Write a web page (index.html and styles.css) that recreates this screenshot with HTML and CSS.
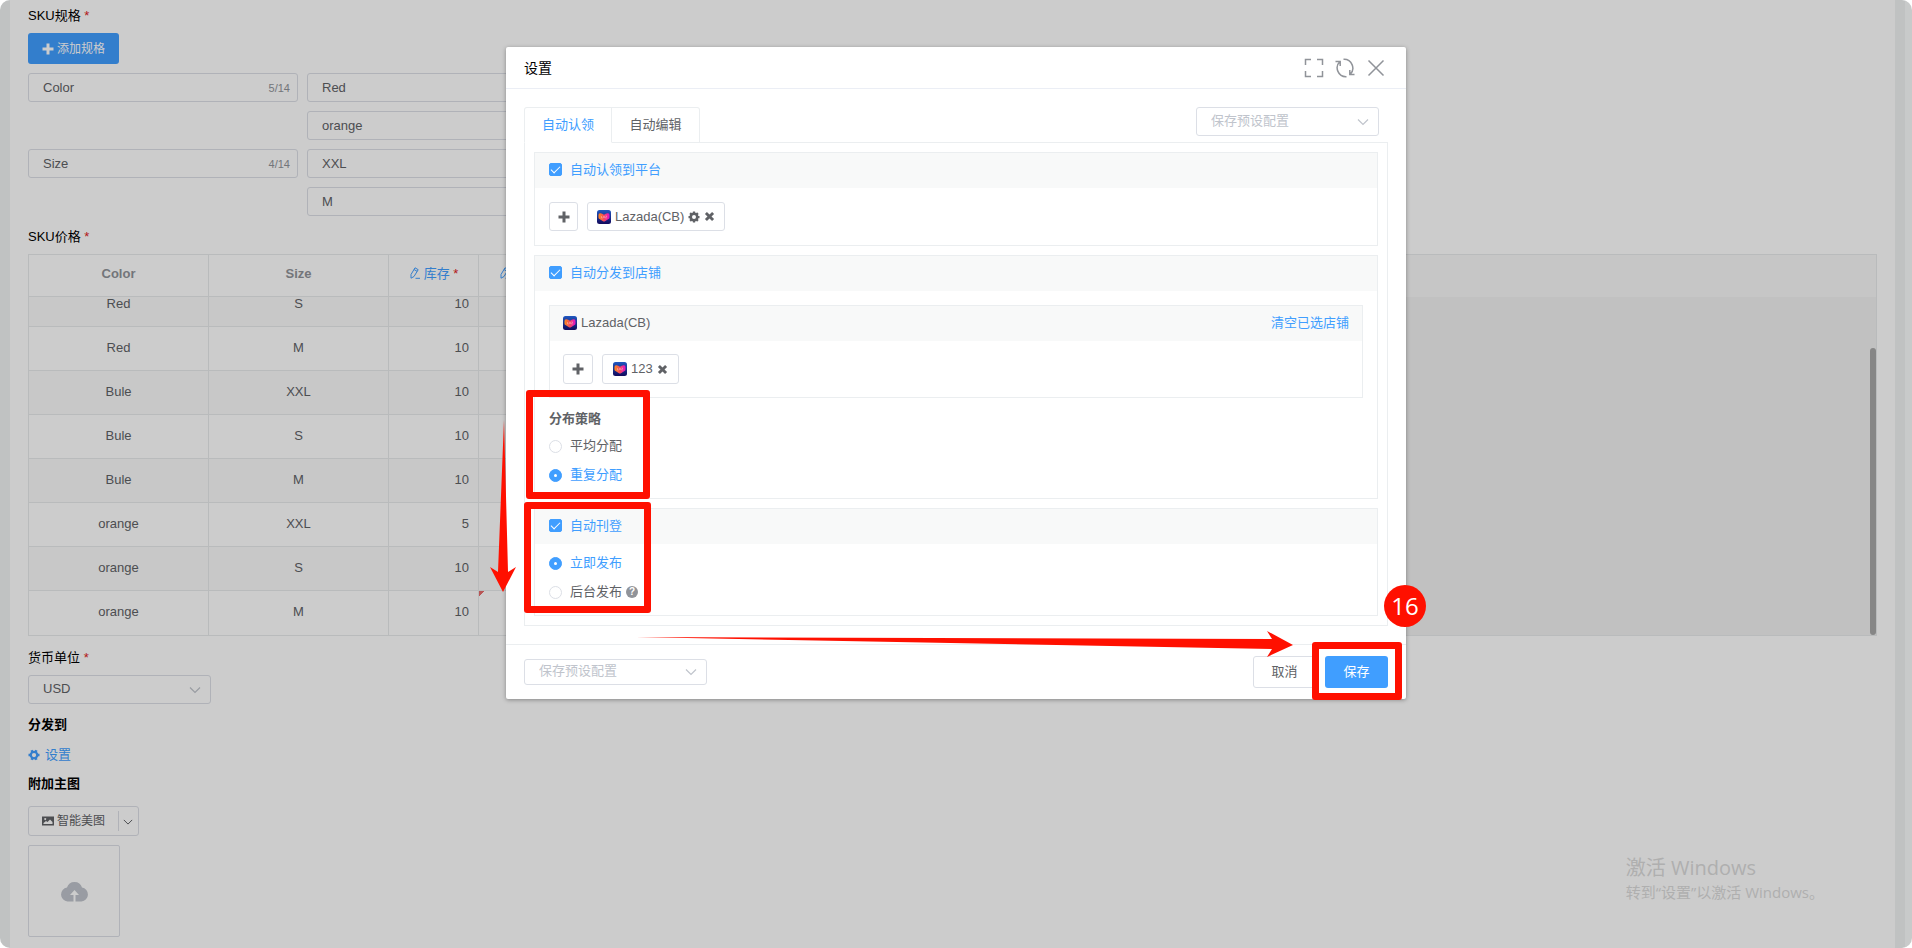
FILE: index.html
```html
<!DOCTYPE html>
<html lang="zh-CN">
<head>
    <meta charset="UTF-8">
    <meta name="viewport" content="width=device-width, initial-scale=1.0">
    <title>设置</title>
    <link rel="stylesheet" href="styles.css">
</head>
<body>
    <!-- Shared icons -->
    <svg class="sprite" aria-hidden="true">
        <symbol id="i-plus" viewBox="0 0 12 12"><path d="M4.500 .5h3v4h4v3h-4v4h-3v-4h-4v-3h4z"/></symbol>
        <symbol id="i-times" viewBox="0 0 12 12"><path d="M1 3.200 3.200 1 6 3.800 8.800 1 11 3.200 8.200 6 11 8.800 8.800 11 6 8.200 3.200 11 1 8.800 3.800 6z"/></symbol>
        <symbol id="i-arrow" viewBox="0 0 12 12"><path d="M1 3.500 6 8.500 11 3.500" fill="none" stroke="currentColor" stroke-width="1.200"/></symbol>
        <symbol id="i-gear" viewBox="0 0 24 24">
            <circle cx="12" cy="12" r="6.500" fill="none" stroke="currentColor" stroke-width="5"/>
            <path d="M12 1v5M12 18v5M1 12h5M18 12h5M4.200 4.200l3.500 3.500M16.300 16.300l3.500 3.500M4.200 19.800l3.500-3.500M16.300 7.700l3.500-3.500" stroke="currentColor" stroke-width="4.500"/>
        </symbol>
        <symbol id="i-gear6" viewBox="0 0 24 24">
            <circle cx="12" cy="12" r="6.500" fill="none" stroke="currentColor" stroke-width="4.500"/>
            <path d="M7 2.500 9.500 7M17 2.500 14.500 7M7 21.500 9.500 17M17 21.500 14.500 17M1 12h4M19 12h4" stroke="currentColor" stroke-width="5"/>
        </symbol>
        <symbol id="i-edit" viewBox="0 0 12 12"><path d="M2 7.500 6 .800 9.200 2.700 5 9.500 2 11.200zM5 2.500 8.200 4.400M6.500 11.300H11" fill="none" stroke="currentColor" stroke-width="1"/></symbol>
        <symbol id="i-lazada" viewBox="0 0 28 28">
            <rect width="28" height="28" rx="5" fill="url(#night)"/>
            <path d="M3 10Q3 7 6 6.500 10 6 14 9.500 18 6 22 6.500 25 7 25 10v5q0 2-2 3l-7 4.500q-2 1-4 0L5 18q-2-1-2-3z" fill="url(#heart)"/>
            <path d="M9 12v4h2.500M12.500 16l1.500-4 1.500 4M17 12h2.500L17 16h2.500" fill="none" stroke="#fff" stroke-opacity=".6" stroke-width="1"/>
        </symbol>
        <linearGradient id="night" x2="0" y2="1"><stop offset="0" stop-color="#2058c0"/><stop offset="1" stop-color="#12095c"/></linearGradient>
        <linearGradient id="heart"><stop offset="0" stop-color="#ff8a1c"/><stop offset=".5" stop-color="#f5485f"/><stop offset="1" stop-color="#e312c8"/></linearGradient>
    </svg>

    <div class="screen">
        <div class="page">
            <div class="label">SKU规格 <span class="star">*</span></div>
            <button class="btn btn-primary btn-add"><svg class="icon"><use href="#i-plus"/></svg>添加规格</button>

            <div class="specs">
                <div class="field">
                    <input id="spec1" type="text" value="Color" aria-label="规格名称">
                    <span class="count">5/14</span>
                </div>
                <div class="values">
                    <input type="text" value="Red" aria-label="规格值">
                    <input type="text" value="orange" aria-label="规格值">
                </div>
                <div class="field">
                    <input id="spec2" type="text" value="Size" aria-label="规格名称">
                    <span class="count">4/14</span>
                </div>
                <div class="values">
                    <input type="text" value="XXL" aria-label="规格值">
                    <input type="text" value="M" aria-label="规格值">
                </div>
            </div>

            <div class="label">SKU价格 <span class="star">*</span></div>
            <div class="grid">
                <table class="sku sku-head">
                    <tr>
                        <th class="wide">Color</th>
                        <th class="wide">Size</th>
                        <th class="stock"><a href="#"><svg class="icon"><use href="#i-edit"/></svg>库存</a> <span class="star">*</span></th>
                        <th class="edit"><a href="#" aria-label="编辑"><svg class="icon"><use href="#i-edit"/></svg></a></th>
                    </tr>
                </table>
                <div class="grid-body">
                    <table class="sku">
                        <tr><td class="wide">Red</td><td class="wide">S</td><td class="stock">10</td><td></td></tr>
                        <tr><td>Red</td><td>M</td><td class="stock">10</td><td></td></tr>
                        <tr><td>Bule</td><td>XXL</td><td class="stock">10</td><td></td></tr>
                        <tr><td>Bule</td><td>S</td><td class="stock">10</td><td></td></tr>
                        <tr><td>Bule</td><td>M</td><td class="stock">10</td><td></td></tr>
                        <tr><td>orange</td><td>XXL</td><td class="stock">5</td><td></td></tr>
                        <tr><td>orange</td><td>S</td><td class="stock">10</td><td></td></tr>
                        <tr><td>orange</td><td>M</td><td class="stock">10</td><td class="dirty"></td></tr>
                    </table>
                    <div class="scroll-thumb"></div>
                </div>
            </div>

            <label class="label" for="currency">货币单位 <span class="star">*</span></label>
            <div class="select">
                <select id="currency"><option>USD</option></select>
                <svg class="icon"><use href="#i-arrow"/></svg>
            </div>

            <div class="label label-bold">分发到</div>
            <a class="setting" href="#"><svg class="icon"><use href="#i-gear6"/></svg>设置</a>
            <div class="label label-bold label-image">附加主图</div>

            <div class="split">
                <button class="split-main">
                    <svg class="icon" viewBox="0 0 12 10"><path fill-rule="evenodd" d="M0 .500h12v9H0zM1.500 8h9V6L8 3.500 5.500 6 4 5 1.500 7zM3.200 2a1 1 0 1 0 .010 0z"/></svg>智能美图
                </button>
                <button class="split-more" aria-label="更多"><svg class="icon"><use href="#i-arrow"/></svg></button>
            </div>
            <button class="upload" aria-label="上传图片">
                <svg viewBox="0 0 28 22"><path fill-rule="evenodd" d="M7 21.500a7 7 0 0 1-.500-13.900A7.800 7.800 0 0 1 21.500 7.600 7 7 0 0 1 21 21.500h-6V15h3.500L14 10l-4.500 5H13v6.500z"/></svg>
            </button>
        </div>

        <div class="mask">
            <div class="modal" role="dialog" aria-label="设置">
                <div class="modal-header">
                    <span>设置</span>
                    <div class="modal-tools">
                        <button aria-label="全屏"><svg viewBox="0 0 20 20"><path d="M1.500 7V1.500H7M13 1.500h5.500V7M18.500 13v5.500H13M7 18.500H1.500V13"/></svg></button>
                        <button aria-label="刷新"><svg viewBox="0 0 20 20"><path d="M5 3.500A8.800 8.800 0 0 0 11.500 18.700M8.500 1.300A8.800 8.800 0 0 1 15 16.500M.5 3.500H5.200V8M19.500 16.500h-4.700V12"/></svg></button>
                        <button aria-label="关闭"><svg viewBox="0 0 20 20"><path d="M2.500 2.500l15 15M17.500 2.500l-15 15"/></svg></button>
                    </div>
                </div>

                <div class="modal-body">
                    <div class="tabs">
                        <button class="tab active">自动认领</button>
                        <button class="tab">自动编辑</button>
                        <div class="select select-preset">
                            <select aria-label="保存预设配置"><option>保存预设配置</option></select>
                            <svg class="icon"><use href="#i-arrow"/></svg>
                        </div>
                    </div>

                    <div class="panel">
                        <div class="card">
                            <div class="card-header">
                                <label class="check checked"><input type="checkbox" checked>自动认领到平台</label>
                            </div>
                            <div class="card-tags">
                                <button class="plus" aria-label="添加平台"><svg class="icon"><use href="#i-plus"/></svg></button>
                                <span class="tag">
                                    <svg class="logo"><use href="#i-lazada"/></svg>
                                    <span>Lazada(CB)</span>
                                    <button aria-label="平台设置"><svg class="icon"><use href="#i-gear"/></svg></button>
                                    <button aria-label="移除"><svg class="icon small"><use href="#i-times"/></svg></button>
                                </span>
                            </div>
                        </div>

                        <div class="card">
                            <div class="card-header">
                                <label class="check checked"><input type="checkbox" checked>自动分发到店铺</label>
                            </div>
                            <div class="card-content">
                                <div class="shop">
                                    <div class="shop-header">
                                        <svg class="logo"><use href="#i-lazada"/></svg>
                                        <span>Lazada(CB)</span>
                                        <a href="#">清空已选店铺</a>
                                    </div>
                                    <div class="shop-tags">
                                        <button class="plus" aria-label="添加店铺"><svg class="icon"><use href="#i-plus"/></svg></button>
                                        <span class="tag">
                                            <svg class="logo"><use href="#i-lazada"/></svg>
                                            <span>123</span>
                                            <button aria-label="移除"><svg class="icon small"><use href="#i-times"/></svg></button>
                                        </span>
                                    </div>
                                </div>
                                <div class="strategy">分布策略</div>
                                <div class="radios">
                                    <label class="check"><input type="radio" name="strategy">平均分配</label>
                                    <label class="check checked"><input type="radio" name="strategy" checked>重复分配</label>
                                </div>
                            </div>
                        </div>

                        <div class="card">
                            <div class="card-header">
                                <label class="check checked"><input type="checkbox" checked>自动刊登</label>
                            </div>
                            <div class="card-publish radios">
                                <label class="check checked"><input type="radio" name="publish" checked>立即发布</label>
                                <label class="check"><input type="radio" name="publish">后台发布<span class="help">?</span></label>
                            </div>
                        </div>
                    </div>
                </div>

                <div class="modal-footer">
                    <div class="select select-preset select-small">
                        <select aria-label="保存预设配置"><option>保存预设配置</option></select>
                        <svg class="icon"><use href="#i-arrow"/></svg>
                    </div>
                    <button class="btn btn-cancel">取消</button>
                    <button class="btn btn-primary">保存</button>
                </div>

                <!-- Tutorial marks drawn over the dialog -->
                <div class="mark mark-strategy"></div>
                <div class="mark mark-publish"></div>
                <div class="mark mark-save"></div>
                <svg class="arrows" viewBox="-20 0 940 652">
                    <path d="M-2 373 2 525 10 520-3 545-16 520-8 525z"/>
                    <path d="M130 590 766 592 761 584 787 598 761 610 766 602z"/>
                </svg>
                <div class="step-badge">16</div>
            </div>
        </div>

        <div class="watermark">
            <div class="watermark-title">激活 Windows</div>
            <div>转到“设置”以激活 Windows。</div>
        </div>
    </div>
</body>
</html>
```
FILE: styles.css
```css
* {
    box-sizing: border-box;
}
body {
    margin: 0;
    background: #fff;
    color: #606266;
    font: 13px/20px "Liberation Sans", "Noto Sans CJK SC", sans-serif;
}
button, input, select {
    font: inherit;
    color: inherit;
    margin: 0;
}
button {
    padding: 0;
    border: 0;
    background: none;
    cursor: pointer;
}
a {
    color: #409eff;
    text-decoration: none;
}
.sprite {
    position: absolute;
    width: 0;
    height: 0;
}
.icon {
    width: 12px;
    height: 12px;
    fill: currentColor;
}
.screen {
    position: relative;
    min-height: 100vh;
    padding: 0 7px 0 0;
    background: #fbfdfd;
    border-radius: 10px;
    overflow: hidden;
}

/* Page behind the dialog */
.page {
    min-height: 100vh;
    padding: 6px 18px 10px;
    background: #fff;
    border: solid #f0f3f3;
    border-width: 0 10px;
}
.label {
    display: block;
    margin: 11px 0 7px;
    color: #000;
}
.label:first-child {
    margin-top: 0;
}
.label-bold {
    font-weight: bold;
    margin-bottom: 10px;
}
.label-image {
    margin: 9px 0 12px;
}
.star {
    color: #e02020;
}
.btn {
    display: inline-flex;
    align-items: center;
    justify-content: center;
    min-width: 63px;
    height: 32px;
    padding: 0 14px;
    border-radius: 3px;
}
.btn-primary {
    background: #409eff;
    color: #fff;
}
.btn-add {
    height: 31px;
    gap: 3px;
    font-size: 12px;
}
.specs {
    display: grid;
    grid-template-columns: 270px 270px;
    gap: 9px;
    align-items: start;
    margin-top: 9px;
}
.values {
    display: grid;
    gap: 9px;
}
.specs input {
    width: 100%;
    height: 29px;
    padding: 0 14px;
    border: 1px solid #dcdfe6;
    border-radius: 3px;
    background: transparent;
}
.field {
    display: grid;
    align-items: center;
}
.field > * {
    grid-area: 1 / 1;
}
.count {
    justify-self: end;
    margin-right: 8px;
    color: #909399;
    font-size: 11px;
}
.grid {
    height: 382px;
    margin-bottom: 12px;
    display: flex;
    flex-direction: column;
    border: 1px solid #e8eaec;
    background: #f8f8f8;
}
.sku {
    border-collapse: separate;
    border-spacing: 0;
    table-layout: fixed;
    width: 640px;
    background: #fff;
}
.sku th, .sku td {
    height: 44px;
    padding: 0 9px 2px;
    border-right: 1px solid #e8eaec;
    border-bottom: 1px solid #e8eaec;
    text-align: center;
}
.sku th {
    height: 42px;
    padding-bottom: 4px;
    color: #909399;
}
.sku th a {
    font-weight: normal;
}
.sku th .icon {
    margin-right: 3px;
    vertical-align: -1px;
}
.sku .wide {
    width: 180px;
}
.sku .stock {
    width: 90px;
}
.sku td.stock {
    text-align: right;
}
.sku th.edit {
    text-align: left;
    padding-left: 20px;
}
.sku-head .star {
    font-weight: normal;
}
.sku tr:nth-child(odd) td {
    background-color: #fafafa;
}
.sku tr:last-child td {
    border-bottom: 0;
}
.sku .dirty {
    background: linear-gradient(135deg, #e66c6c 4px, transparent 4px) no-repeat;
}
.grid-body {
    position: relative;
    flex: 1;
    min-height: 0;
    display: flex;
    flex-direction: column;
    justify-content: flex-end;
    overflow: hidden;
    background: #f2f2f2;
}
.scroll-thumb {
    position: absolute;
    right: 0;
    bottom: 0;
    width: 6px;
    height: 85%;
    border-radius: 3px;
    background: #a8a8a8;
}
.select {
    display: grid;
    align-items: center;
    width: 183px;
    height: 29px;
    border: 1px solid #dcdfe6;
    border-radius: 3px;
}
.select > * {
    grid-area: 1 / 1;
}
.select select {
    height: 100%;
    padding: 0 14px 2px;
    border: 0;
    background: transparent;
    appearance: none;
}
.select .icon {
    justify-self: end;
    margin-right: 9px;
    color: #c0c4cc;
    pointer-events: none;
}
.setting {
    display: flex;
    align-items: center;
    gap: 5px;
}
.split {
    display: inline-flex;
    align-items: center;
    height: 30px;
    border: 1px solid #dcdfe6;
    border-radius: 3px;
    font-size: 12px;
}
.split-main {
    display: flex;
    align-items: center;
    gap: 3px;
    padding: 0 13px;
}
.split-more {
    height: 20px;
    padding: 2px 5px 0 4px;
    border-left: 1px solid #dcdfe6;
}
.split-more .icon {
    width: 10px;
    height: 10px;
}
.upload {
    display: flex;
    align-items: center;
    justify-content: center;
    width: 92px;
    height: 92px;
    margin-top: 9px;
    border: 1px solid #dcdfe6;
    border-radius: 2px;
}
.upload svg {
    width: 29px;
    height: 22px;
    fill: #c0c4cc;
}

/* Dialog */
.mask {
    position: absolute;
    inset: 0;
    display: flex;
    justify-content: center;
    align-items: flex-start;
    padding-top: 47px;
    background: rgba(0, 0, 0, 0.2);
}
.modal {
    position: relative;
    width: 900px;
    background: #fff;
    border-radius: 2px;
    box-shadow: 0 1px 4px rgba(0, 0, 0, 0.35);
}
.modal-header {
    display: flex;
    align-items: center;
    justify-content: space-between;
    height: 42px;
    padding: 0 20px 0 18px;
    border-bottom: 1px solid #ebeef5;
    color: #000;
    font-size: 14px;
}
.modal-tools {
    display: flex;
    gap: 11px;
}
.modal-tools button, .modal-tools svg {
    display: block;
    width: 20px;
    height: 20px;
}
.modal-tools path {
    fill: none;
    stroke: #909399;
    stroke-width: 1.5;
}
.modal-body {
    padding: 18px;
}
.tabs {
    display: flex;
    align-items: flex-start;
    height: 36px;
}
.tab {
    position: relative;
    width: 88px;
    height: 36px;
    border: 1px solid #ebeef0;
    border-left: 0;
    border-top-right-radius: 3px;
}
.tab.active {
    border-left: 1px solid #ebeef0;
    border-bottom-color: #fff;
    border-radius: 3px 0 0 0;
    color: #409eff;
}
.tabs .select {
    margin: 0 9px 0 auto;
}
.select-preset {
    color: #c0c4cc;
}
.select-small {
    height: 26px;
}
.panel {
    display: flex;
    flex-direction: column;
    gap: 9px;
    margin-top: -1px;
    padding: 9px;
    border: 1px solid #ebeef0;
}
.card, .shop {
    border: 1px solid #ebeef0;
}
.card-header {
    display: flex;
    align-items: center;
    height: 35px;
    padding: 0 14px 2px;
    background: #f8f9f9;
}
.check {
    display: flex;
    align-items: center;
}
.checked {
    color: #409eff;
}
.check input {
    appearance: none;
    display: grid;
    place-items: center;
    width: 13px;
    height: 13px;
    margin-right: 8px;
    border: 1px solid #dcdfe6;
    border-radius: 2px;
    background: #fff;
}
.check input[type="radio"] {
    border-radius: 50%;
}
.check input:checked {
    background: #409eff;
    border-color: #409eff;
}
.check input[type="checkbox"]::after {
    content: "";
    width: 8px;
    height: 4px;
    margin-bottom: 3px;
    border: solid #fff;
    border-width: 0 0 1px 1px;
    transform: rotate(-45deg);
}
.check input[type="radio"]:checked::after {
    content: "";
    width: 3px;
    height: 3px;
    border-radius: 50%;
    background: #fff;
}
.card-tags {
    display: flex;
    gap: 9px;
    padding: 14px;
}
.plus {
    width: 29px;
    height: 29px;
    border: 1px solid #dcdfe6;
    border-radius: 3px;
}
.plus .icon {
    display: block;
    margin: 0 auto;
}
.tag {
    display: flex;
    align-items: center;
    gap: 4px;
    height: 29px;
    padding: 0 9px;
    border: 1px solid #dcdfe6;
    border-radius: 3px;
}
.tag button {
    display: flex;
}
.logo {
    width: 14px;
    height: 14px;
}
.icon.small {
    width: 11px;
    height: 11px;
}
.card-content {
    padding: 14px 14px 12px;
}
.shop-header {
    display: flex;
    align-items: center;
    gap: 4px;
    height: 35px;
    padding: 0 13px 2px;
    background: #f8f9f9;
}
.shop-header a {
    margin-left: auto;
}
.shop-tags {
    display: flex;
    gap: 9px;
    padding: 13px;
}
.shop-tags .plus {
    width: 30px;
    height: 30px;
}
.shop-tags .tag {
    height: 30px;
    padding: 0 10px;
}
.strategy {
    margin: 11px 0 7px;
    font-weight: bold;
}
.radios {
    display: flex;
    flex-direction: column;
    gap: 9px;
}
.card-content .radios {
    margin-bottom: 13px;
}
.card-content {
    padding-bottom: 0;
}
.card-publish {
    padding: 9px 14px 13px;
}
.help {
    width: 12px;
    height: 12px;
    margin-left: 4px;
    border-radius: 50%;
    background: #909399;
    color: #fff;
    font: bold 10px/12px "Liberation Sans", sans-serif;
    text-align: center;
}
.modal-footer {
    display: flex;
    align-items: center;
    gap: 9px;
    padding: 11px 18px;
    border-top: 1px solid #ebeef0;
}
.btn-cancel {
    margin-left: auto;
    border: 1px solid #dcdfe6;
}

/* Tutorial marks */
.mark {
    position: absolute;
    border: 7px solid #ff1000;
    border-radius: 3px;
}
.mark-strategy {
    left: 20px;
    top: 343px;
    width: 124px;
    height: 109px;
}
.mark-publish {
    left: 18px;
    top: 455px;
    width: 127px;
    height: 111px;
}
.mark-save {
    right: 4px;
    bottom: -1px;
    width: 90px;
    height: 58px;
}
.arrows {
    position: absolute;
    left: -20px;
    top: 0;
    width: 940px;
    height: 652px;
    fill: #ff1000;
    pointer-events: none;
}
.step-badge {
    position: absolute;
    right: -20px;
    bottom: 72px;
    width: 42px;
    height: 42px;
    border-radius: 50%;
    background: #ff1000;
    color: #fff;
    font: 24px/42px "Open Sans", sans-serif;
    text-align: center;
}
.watermark {
    position: absolute;
    right: 88px;
    bottom: 45px;
    color: #afafaf;
    font: 15px/22px "Open Sans", "Noto Sans CJK SC", sans-serif;
}
.watermark-title {
    font-size: 20px;
    line-height: 26px;
}
```
